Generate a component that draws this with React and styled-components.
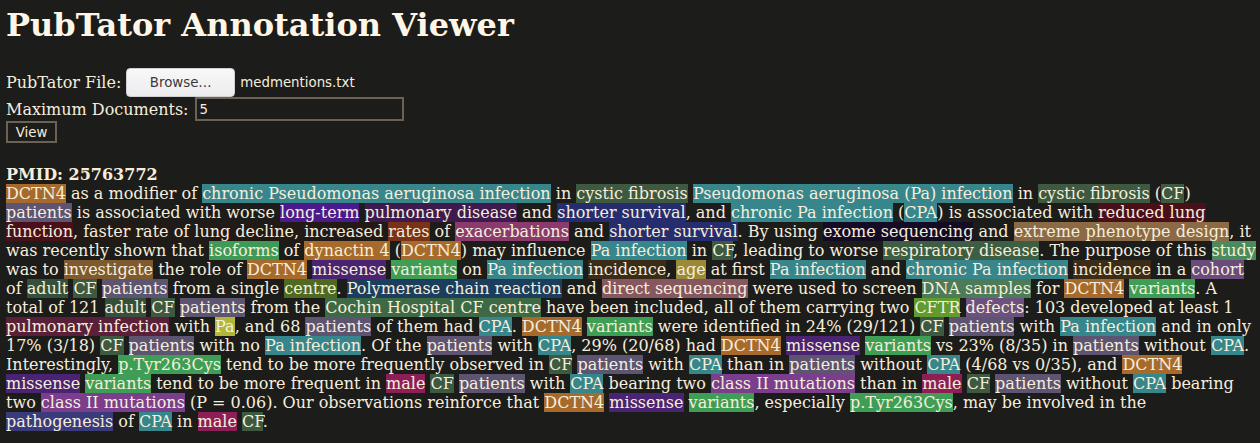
import styled, { createGlobalStyle } from "styled-components";

const GlobalStyle = createGlobalStyle`
  * {
    box-sizing: border-box;
  }

  body {
    margin: 0;
    background-color: #1c1c1b;
    color: #f6eedc;
    font-family: "DejaVu Serif", serif;
    font-size: 16px;
  }
`;

const Page = styled.div`
  padding: 7px 4px 0 6px;
`;

const Title = styled.h1`
  margin: 0 0 23px;
  font-size: 32px;
  font-weight: bold;
  line-height: 37px;
  color: #fdf6e6;
`;

const Row = styled.div`
  display: flex;
  align-items: center;
  gap: ${({ $gap }) => $gap || 5}px;
  height: ${({ $height }) => $height}px;
`;

const Label = styled.label`
  line-height: 19px;
`;

const BrowseButton = styled.button`
  width: 109px;
  height: 29px;
  border: 1px solid #d0d0d4;
  border-radius: 4px;
  background: linear-gradient(#f8f8f9, #ececee);
  color: #3a3a3d;
  font-family: "DejaVu Sans", sans-serif;
  font-size: 13.33px;
`;

const FileName = styled.span`
  font-family: "DejaVu Sans", sans-serif;
  font-size: 13.33px;
`;

const NumberInput = styled.input`
  width: 209px;
  height: 24px;
  padding: 0 3px;
  border: 2px solid #6c6254;
  background: transparent;
  color: #f6eedc;
  font-family: "DejaVu Sans", sans-serif;
  font-size: 13.33px;
  outline: none;
`;

const ViewButton = styled.button`
  width: 51px;
  height: 22px;
  padding: 0;
  border: 2px solid #6c6254;
  background: transparent;
  color: #f6eedc;
  font-family: "DejaVu Sans", sans-serif;
  font-size: 13.33px;
`;

const Document = styled.div`
  margin-top: 22px;
  line-height: 19px;
`;

const Pmid = styled.div`
  font-weight: bold;
`;

const Mark = styled.span`
  background-color: ${({ $color }) => $color};
`;

const COLORS = {
  gene: "#a66b2c",
  inf: "#37868b",
  cf: "#3d5940",
  adult: "#34503b",
  pat: "#5d5472",
  longterm: "#4b1a8c",
  pulm: "#3e1a4e",
  surv: "#252d6e",
  reduced: "#4a101a",
  decline: "#221a17",
  rates: "#7a3316",
  exac: "#8a3a6c",
  exome: "#140b27",
  design: "#8b6a45",
  iso: "#3f9a57",
  resp: "#3e5e44",
  study: "#4b8b5b",
  invest: "#7f5a2e",
  missense: "#4a2372",
  var: "#3f9e55",
  incid: "#3a2c17",
  age: "#9a8a38",
  cohort: "#6b4a7c",
  centre: "#4e6a22",
  pcr: "#1c3e5c",
  dseq: "#87575f",
  dna: "#4d7a57",
  cochin: "#3d6a45",
  cftr: "#609b2d",
  defects: "#6b5080",
  pinf: "#5b2039",
  pa: "#b2b73a",
  male: "#8e1f56",
  class2: "#7a3e8c",
  patho: "#3a3b7b",
};

const ABSTRACT =
  "[DCTN4|gene] as a modifier of [chronic Pseudomonas aeruginosa infection|inf] in [cystic fibrosis|cf] " +
  "[Pseudomonas aeruginosa (Pa) infection|inf] in [cystic fibrosis|cf] ([CF|cf]) [patients|pat] is associated " +
  "with worse [long-term|longterm] [pulmonary disease|pulm] and [shorter survival|surv], and " +
  "[chronic Pa infection|inf] ([CPA|inf]) is associated with [reduced lung function|reduced]" +
  "[, faster rate of lung decline, increased|decline] [rates|rates] of [exacerbations|exac] and " +
  "[shorter survival|surv]. By using [exome sequencing|exome] and [extreme phenotype design|design], it " +
  "was recently shown that [isoforms|iso] of [dynactin 4|gene] ([DCTN4|gene]) may influence " +
  "[Pa infection|inf] in [CF|cf], leading to worse [respiratory disease|resp]. The purpose of this " +
  "[study|study] was to [investigate|invest] the role of [DCTN4|gene] [missense|missense] [variants|var] on " +
  "[Pa infection|inf] [incidence|incid], [age|age] at first [Pa infection|inf] and [chronic Pa infection|inf] " +
  "[incidence|incid] in a [cohort|cohort] of [adult|adult] [CF|cf] [patients|pat] from a single [centre|centre]. " +
  "[Polymerase chain reaction|pcr] and [direct sequencing|dseq] were used to screen [DNA samples|dna] for " +
  "[DCTN4|gene] [variants|var]. A total of 121 [adult|adult] [CF|cf] [patients|pat] from the " +
  "[Cochin Hospital CF centre|cochin] have been included, all of them carrying two [CFTR|cftr] " +
  "[defects|defects]: 103 developed at least 1 [pulmonary infection|pinf] with [Pa|pa], and 68 " +
  "[patients|pat] of them had [CPA|inf]. [DCTN4|gene] [variants|var] were identified in 24% (29/121) " +
  "[CF|cf] [patients|pat] with [Pa infection|inf] and in only 17% (3/18) [CF|cf] [patients|pat] with no " +
  "[Pa infection|inf]. Of the [patients|pat] with [CPA|inf], 29% (20/68) had [DCTN4|gene] " +
  "[missense|missense] [variants|var] vs 23% (8/35) in [patients|pat] without [CPA|inf]. Interestingly, " +
  "[p.Tyr263Cys|var] tend to be more frequently observed in [CF|cf] [patients|pat] with [CPA|inf] than in " +
  "[patients|pat] without [CPA|inf] (4/68 vs 0/35), and [DCTN4|gene] [missense|missense] [variants|var] " +
  "tend to be more frequent in [male|male] [CF|cf] [patients|pat] with [CPA|inf] bearing two " +
  "[class II mutations|class2] than in [male|male] [CF|cf] [patients|pat] without [CPA|inf] bearing two " +
  "[class II mutations|class2] (P = 0.06). Our observations reinforce that [DCTN4|gene] [missense|missense] " +
  "[variants|var], especially [p.Tyr263Cys|var], may be involved in the [pathogenesis|patho] of [CPA|inf] " +
  "in [male|male] [CF|cf].";

function parseAnnotations(text) {
  const parts = [];
  const re = /\[([^|\]]+)\|(\w+)\]/g;
  let last = 0;
  let m;
  while ((m = re.exec(text))) {
    if (m.index > last) parts.push({ text: text.slice(last, m.index) });
    parts.push({ text: m[1], type: m[2] });
    last = re.lastIndex;
  }
  if (last < text.length) parts.push({ text: text.slice(last) });
  return parts;
}

function AnnotatedText({ text }) {
  return parseAnnotations(text).map((part, i) =>
    part.type ? (
      <Mark key={i} $color={COLORS[part.type]}>
        {part.text}
      </Mark>
    ) : (
      <span key={i}>{part.text}</span>
    )
  );
}

function App() {
  return (
    <>
      <GlobalStyle />
      <Page>
        <Title>PubTator Annotation Viewer</Title>
        <Row $height={30} $gap={5}>
          <Label htmlFor="file">PubTator File:</Label>
          <BrowseButton id="file">Browse…</BrowseButton>
          <FileName>medmentions.txt</FileName>
        </Row>
        <Row $height={24} $gap={6}>
          <Label htmlFor="max">Maximum Documents:</Label>
          <NumberInput id="max" defaultValue="5" />
        </Row>
        <Row $height={22}>
          <ViewButton>View</ViewButton>
        </Row>
        <Document>
          <Pmid>PMID: 25763772</Pmid>
          <AnnotatedText text={ABSTRACT} />
        </Document>
      </Page>
    </>
  );
}

export default App;
